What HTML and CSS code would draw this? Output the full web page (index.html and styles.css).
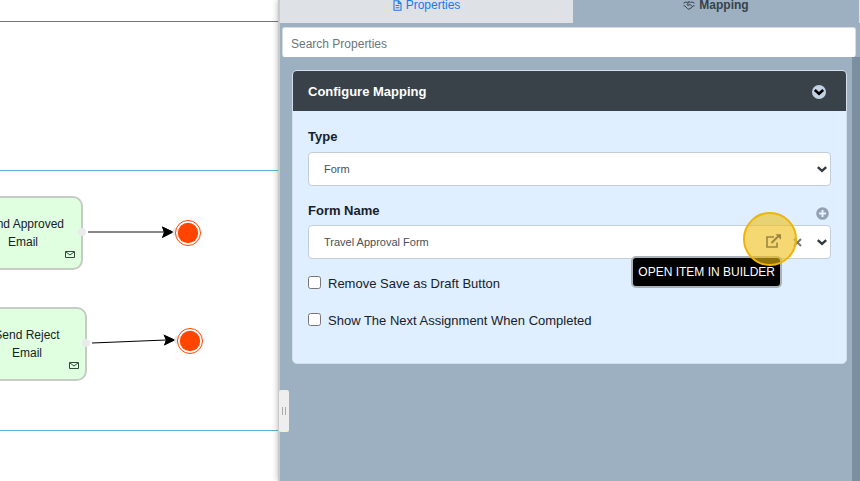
FILE: index.html
```html
<!DOCTYPE html>
<html lang="en">
<head>
<meta charset="utf-8">
<title>Process Builder</title>
<link rel="stylesheet" href="styles.css">
</head>
<body>
<div class="app">
  <main class="canvas">
    <div class="lane lane-top"></div>
    <div class="lane lane-middle"></div>
    <div class="lane lane-bottom"></div>
    <svg class="edges" width="278" height="481" viewBox="0 0 278 481" aria-hidden="true">
      <path d="M88 232H164" stroke="#111" stroke-width="1.100"/>
      <path d="M162 226.500L174 232L162 238L164 232.500Z"/>
      <path d="M92 343L166 340" stroke="#000" stroke-width="1.200"/>
      <path d="M163.500 334.500L175.500 340L164 345.500L166 340Z"/>
      <g fill="#eaeaea">
        <circle cx="176" cy="232" r="4"/><circle cx="178" cy="340" r="4"/>
      </g>
      <path d="M162 226.500L173.500 232L162 238L164 232.500ZM163.500 334.500L175 340L164 345.500L166 340Z"/>
      <g fill="#fff" stroke="#ff4500">
        <circle cx="188" cy="233" r="12.500"/><circle cx="190" cy="341" r="12.500"/>
      </g>
      <g fill="#ff4500">
        <circle cx="188" cy="233" r="10.200"/><circle cx="190" cy="341" r="10.200"/>
      </g>
    </svg>
    <div class="node node-approved">Send Approved<br>Email
      <svg class="mail" width="10" height="8" viewBox="0 0 10 8"><path d="M.5.5h9v6h-9zM1 1l4 3 4-3"/></svg>
    </div>
    <div class="node node-reject">Send Reject<br>Email
      <svg class="mail" width="10" height="8" viewBox="0 0 10 8"><path d="M.5.5h9v6h-9zM1 1l4 3 4-3"/></svg>
    </div>
  </main>

  <aside class="panel">
    <nav class="tabs">
      <a class="tab" href="#properties">
        <svg width="9" height="11" viewBox="0 0 9 11"><path d="M1 .7h4.500L8 3.200v7H1zM5.300.7v2.700H8M2.700 5.500h3.600M2.700 7.700h3.600" fill="none" stroke="currentColor" stroke-width="1.100"/></svg>
        Properties</a>
      <a class="tab tab-active" href="#mapping">
        <svg width="12" height="9" viewBox="0 0 12 9"><path d="M.5 2.200L2.800 1l1.500.4L6 .7l1.700.7L9.200 1l2.300 1.200M.5 4.800h1.200l3 3 1.200.4 2.600-1.500 1.500-1.900h1.500M6 1.500L4 3.300l.6 1 1.400-.2 1-.8 2.200 2.300" fill="none" stroke="currentColor"/></svg>
        Mapping</a>
    </nav>
    <input class="search" type="search" placeholder="Search Properties" aria-label="Search Properties">
    <div class="scroll">
      <section class="card">
        <header class="card-header">
          <h2>Configure Mapping</h2>
          <button class="round" type="button" aria-label="Collapse">
            <svg width="14" height="14" viewBox="0 0 14 14"><circle cx="7" cy="7" r="7" fill="#c3d2e3"/><path d="M2.800 5l4.200 3.800L11.200 5" fill="none" stroke="#000" stroke-width="2.600"/></svg>
          </button>
        </header>
        <div class="card-body">
          <div class="row"><label for="type">Type</label></div>
          <div class="field">
            <select id="type"><option>Form</option></select>
            <svg class="chevron" width="10" height="7" viewBox="0 0 10 7"><path d="M.8 1.200L5 5l4.200-3.800"/></svg>
          </div>
          <div class="row">
            <label for="form-name">Form Name</label>
            <button class="round add" type="button" aria-label="Add form">
              <svg width="13" height="13" viewBox="0 0 13 13"><circle cx="6.500" cy="6.500" r="6.300" fill="#93a1b0"/><path d="M6.500 3v7M3 6.500h7" stroke="#e6f2ff" stroke-width="2"/></svg>
            </button>
          </div>
          <div class="field">
            <select id="form-name"><option>Travel Approval Form</option></select>
            <button class="clear" type="button" aria-label="Clear">
              <svg width="9" height="9" viewBox="0 0 9 9"><path d="M1 1l7 7M8 1L1 8" stroke="#777" stroke-width="2"/></svg>
            </button>
            <svg class="chevron" width="10" height="7" viewBox="0 0 10 7"><path d="M.8 1.200L5 5l4.200-3.800"/></svg>
            <span class="tooltip" role="tooltip">OPEN ITEM IN BUILDER</span>
            <button class="open" type="button" aria-label="Open item in builder">
              <svg width="15" height="14" viewBox="0 0 15 14"><path d="M8 3H1v10h10V8.500" fill="none" stroke="#9b853f" stroke-width="1.600"/><path d="M5.500 9L12 2.500" stroke="#9b853f" stroke-width="1.900"/><path d="M9.500.3H15v5.500z" fill="#9b853f"/></svg>
            </button>
          </div>
          <label class="check"><input type="checkbox">Remove Save as Draft Button</label>
          <label class="check"><input type="checkbox">Show The Next Assignment When Completed</label>
        </div>
      </section>
    </div>
    <button class="grip" type="button" aria-label="Resize panel"></button>
  </aside>
</div>
</body>
</html>
```
FILE: styles.css
```css
* { box-sizing: border-box; }

body {
  margin: 0;
  font: 13px/18px "Liberation Sans", Arial, sans-serif;
  color: #17212b;
}

button {
  padding: 0;
  border: 0;
  background: none;
}

svg { display: block; }

.app {
  display: grid;
  grid-template-columns: minmax(0, 139fr) minmax(0, 291fr);
  min-height: 100vh;
  overflow: hidden;
}

/* Process canvas */
.canvas {
  position: relative;
  overflow: hidden;
  background: #fff;
}

.lane { border-bottom: 1px solid #62b2dc; }
.lane-top { height: 22px; border-color: #757575; }
.lane-middle { height: 149px; }
.lane-bottom { height: 260px; }

.edges {
  position: absolute;
  top: 0;
  left: 0;
}

.node {
  position: absolute;
  width: 120px;
  height: 74px;
  padding-top: 17px;
  border: 2px solid #c6cbc6;
  border-radius: 10px;
  background: #e0ffe0;
  font-size: 12px;
  text-align: center;
}

.node::after {
  content: "";
  position: absolute;
  top: 30px;
  right: -5px;
  width: 8px;
  height: 8px;
  border-radius: 50%;
  background: #eaeaea;
}

.node-approved { top: 196px; left: -37px; }
.node-reject { top: 307px; left: -33px; }

.mail {
  position: absolute;
  right: 6px;
  bottom: 9px;
  fill: none;
  stroke: #334a3b;
}

/* Side panel */
.panel {
  position: relative;
  display: flex;
  flex-direction: column;
  border-left: 2px solid #c8cbcc;
  background: #9cb0c1;
  box-shadow: 0 0 6px rgba(0, 0, 0, .3);
}

.tabs {
  display: grid;
  grid-template-columns: 293px 1fr;
  height: 36px;
  margin-top: -13px;
  border-right: 1px solid #dee2e6;
}

.tab {
  display: flex;
  align-items: center;
  justify-content: center;
  gap: 4px;
  background: #dee2e6;
  color: #1a7be8;
  font-size: 12px;
  text-decoration: none;
}

.tab-active {
  background: none;
  color: #36424a;
  font-weight: bold;
}

.search {
  height: 30px;
  margin: 4px 4px 0 2px;
  padding: 4px 8px 0;
  border: 1px solid #d5dde4;
  border-bottom-color: #fff;
  border-radius: 3px;
  background: #fff;
  font: inherit;
  font-size: 12px;
}

.search::placeholder { color: #6c757d; opacity: 1; }

.scroll {
  flex: 1;
  padding: 13px 5px 0 12px;
  border-right: 8px solid #7c8fa0;
}

.card {
  border: 1px solid #d3e0ec;
  border-radius: 5px;
  background: #dfefff;
}

.card-header {
  display: flex;
  align-items: center;
  justify-content: space-between;
  height: 40px;
  padding: 1px 20px 0 15px;
  border-radius: 4px 4px 0 0;
  background: #394249;
  color: #fff;
}

.card-header h2 {
  margin: 0;
  font-size: 13px;
}

.card-body { padding: 17px 15px 33px; }

.row {
  display: flex;
  justify-content: space-between;
  height: 24px;
  font-weight: bold;
}

.add { margin-right: 2px; }

.field {
  position: relative;
  margin-bottom: 16px;
}

.field + .row { height: 23px; }

select {
  display: block;
  width: 100%;
  height: 34px;
  padding: 0 15px;
  border: 1px solid #c3ced9;
  border-radius: 4px;
  background: #fff;
  color: #495057;
  font: inherit;
  font-size: 11px;
  appearance: none;
}

.chevron {
  position: absolute;
  top: 14px;
  right: 4px;
  fill: none;
  stroke: #343a40;
  stroke-width: 2.4;
  pointer-events: none;
}

.clear {
  position: absolute;
  top: 13px;
  right: 29px;
}

.tooltip {
  position: absolute;
  top: 31px;
  right: 49px;
  padding: 5px;
  border: 2px solid #aab2b9;
  border-radius: 5px;
  background: #000;
  color: #fff;
  font-size: 12px;
  white-space: nowrap;
}

.open {
  position: absolute;
  top: -13px;
  right: 34px;
  display: grid;
  place-items: center;
  width: 54px;
  height: 54px;
  padding: 4px 0 0 6px;
  border: 2px solid #edb50b;
  border-radius: 50%;
  background: rgba(240, 190, 20, .6);
}

.check {
  display: flex;
  gap: 7px;
  margin-bottom: 19px;
}

.check input {
  width: 13px;
  height: 13px;
  margin: 1px 0 0;
}

.check:last-child { margin-bottom: 0; }

.grip {
  position: absolute;
  top: 390px;
  left: -1px;
  display: grid;
  place-items: center;
  width: 10px;
  height: 42px;
  border-radius: 2px;
  background: #eee;
}

.grip::before {
  content: "";
  width: 2px;
  height: 8px;
  border: solid #aaa;
  border-width: 0 1px;
}
```
